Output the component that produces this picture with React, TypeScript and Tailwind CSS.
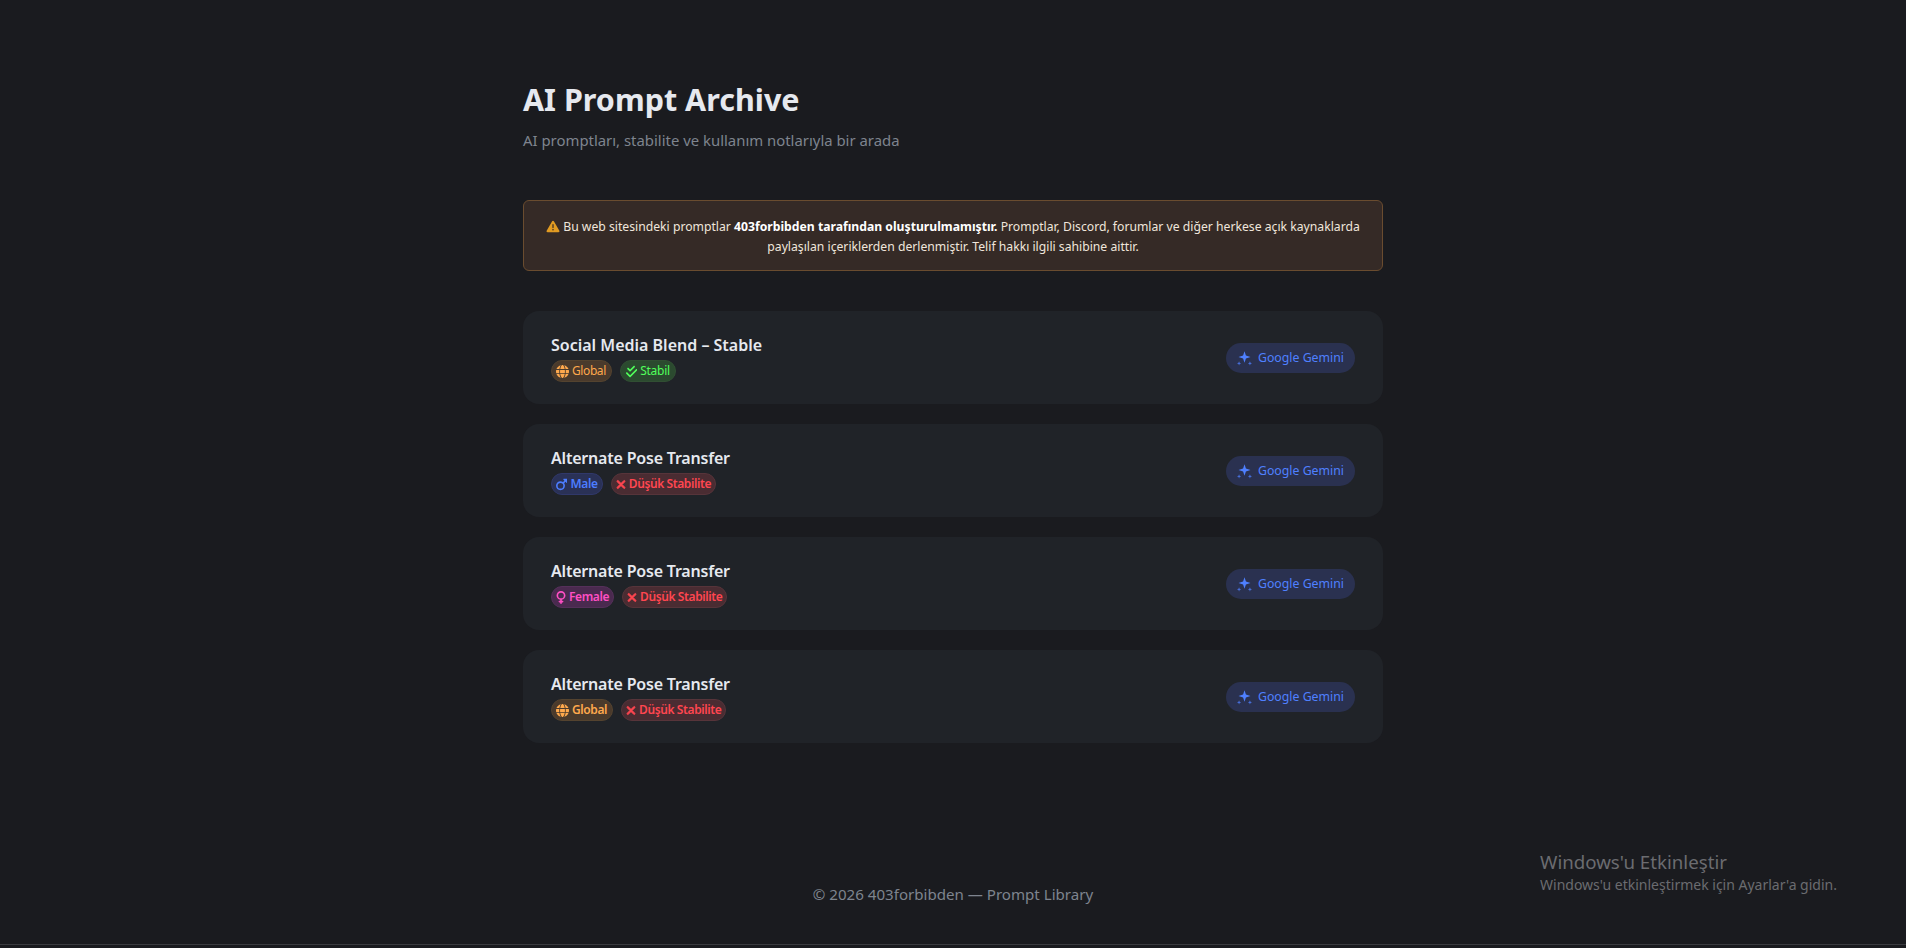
import React from "react";
import { FaGlobe, FaCheckDouble, FaMars, FaVenus, FaXmark, FaTriangleExclamation } from "react-icons/fa6";

function Sparkle({ className }: { className?: string }) {
  return (
    <svg viewBox="0 0 16 16" className={className} fill="currentColor">
      <path d="M8 0.2 L9.5 4.9 L14.4 6.4 L9.5 7.9 L8 12.6 L6.5 7.9 L1.6 6.4 L6.5 4.9 Z" />
      <path d="M2.2 11 L2.8 12.6 L4.4 13.2 L2.8 13.8 L2.2 15.4 L1.6 13.8 L0 13.2 L1.6 12.6 Z" opacity="0.8" />
      <path d="M13.8 11 L14.4 12.6 L16 13.2 L14.4 13.8 L13.8 15.4 L13.2 13.8 L11.6 13.2 L13.2 12.6 Z" opacity="0.8" />
    </svg>
  );
}

type TagKind = "global" | "stable" | "male" | "female" | "low";

function Tag({ kind, bold }: { kind: TagKind; bold?: boolean }) {
  const weight = bold ? "font-semibold" : "font-normal";
  if (kind === "global")
    return (
      <span className={`flex h-[22px] items-center gap-[3px] rounded-full border border-[#54432f] bg-[#4a3a2c] pl-[4px] pr-[5px] text-[12px] tracking-[-0.4px] text-[#ffa94d] ${weight}`}>
        <FaGlobe className="h-[13px] w-[13px]" />
        Global
      </span>
    );
  if (kind === "stable")
    return (
      <span className={`flex h-[22px] items-center gap-[3px] rounded-full border border-[#314f33] bg-[#2b4a2f] pl-[5px] pr-[5px] text-[12px] tracking-[-0.3px] text-[#51ff5b] ${weight}`}>
        <FaCheckDouble className="h-[13px] w-[11.4px]" />
        Stabil
      </span>
    );
  if (kind === "male")
    return (
      <span className="flex h-[22px] items-center gap-[3px] rounded-full border border-[#30386a] bg-[#2a3156] pl-[4px] pr-[4px] text-[12px] font-semibold tracking-[-0.3px] text-[#4c7dff]">
        <FaMars className="h-[13px] w-[11.4px]" />
        Male
      </span>
    );
  if (kind === "female")
    return (
      <span className="flex h-[22px] items-center gap-[3px] rounded-full border border-[#55305a] bg-[#4a2a4f] pl-[4px] pr-[4px] text-[12px] font-semibold tracking-[-0.4px] text-[#ff4fc4]">
        <FaVenus className="h-[13px] w-[10px]" />
        Female
      </span>
    );
  return (
    <span className="flex h-[22px] items-center gap-[3px] rounded-full border border-[#57343a] bg-[#4a2c32] pl-[4px] pr-[4px] text-[12px] font-semibold tracking-[-0.4px] text-[#ff4650]">
      <FaXmark className="h-[13px] w-[10px]" stroke="currentColor" strokeWidth={30} />
      Düşük Stabilite
    </span>
  );
}

function Card({ title, tags, bold, tight }: { title: string; tags: TagKind[]; bold?: boolean; tight?: boolean }) {
  return (
    <div className="flex h-[93px] items-center justify-between rounded-[16px] bg-[#202328] px-[28px]">
      <div className="flex flex-col gap-[3px] pt-[1px]">
        <div className={`text-[16px] leading-[23px] font-semibold text-[#e6e9ef] ${tight ? "tracking-[-0.2px]" : ""}`}>{title}</div>
        <div className="flex gap-[8px]">
          {tags.map((t) => (
            <Tag key={t} kind={t} bold={bold} />
          ))}
        </div>
      </div>
      <div className="flex h-[30px] items-center gap-[6px] rounded-full bg-[#2a3150] px-[11px] pt-[2px] text-[12.3px] text-[#4f80ff]">
        <Sparkle className="h-[15px] w-[15px]" />
        Google Gemini
      </div>
    </div>
  );
}

export default function App() {
  return (
    <div className="relative flex h-[948px] flex-col overflow-hidden bg-[#1a1b1f] font-['Noto_Sans','Open_Sans',sans-serif]">
      <main className="mx-auto w-[860px] flex-1 pt-[79px]">
        <h1 className="text-[30.5px] leading-[40px] font-bold text-[#e6e9ef]">AI Prompt Archive</h1>
        <p className="mt-[10px] text-[14.9px] leading-[22px] text-[#7e848e]">AI promptları, stabilite ve kullanım notlarıyla bir arada</p>
        <div className="mt-[49px] rounded-[6px] border border-[#6a4c2f] bg-[#352a26] px-[20px] pt-[16px] pb-[14px] text-center text-[12.2px] leading-[19.5px] text-[#f0e6dc]">
          <FaTriangleExclamation className="mr-[3px] inline h-[13px] w-[14px] align-[-2px] text-[#e19b22]" />
          Bu web sitesindeki promptlar <strong className="font-bold text-white">403forbibden tarafından oluşturulmamıştır.</strong> Promptlar, Discord, forumlar ve diğer herkese açık kaynaklarda paylaşılan içeriklerden derlenmiştir. Telif hakkı ilgili sahibine aittir.
        </div>
        <div className="mt-[40px] flex flex-col gap-[20px]">
          <Card title="Social Media Blend – Stable" tags={["global", "stable"]} />
          <Card title="Alternate Pose Transfer" tags={["male", "low"]} tight />
          <Card title="Alternate Pose Transfer" tags={["female", "low"]} tight />
          <Card title="Alternate Pose Transfer" tags={["global", "low"]} bold tight />
        </div>
      </main>
      <footer className="pb-[40px] text-center text-[15.1px] leading-[20px] text-[#7e848e]">© 2026 403forbibden — Prompt Library</footer>
      <div className="h-[1px] bg-[#3a3b3f]" />
      <div className="h-[3px]" />
      <div className="absolute top-[849px] left-[1540px] text-[#6b6c70]">
        <div className="text-[18.7px] leading-[26px]">Windows'u Etkinleştir</div>
        <div className="text-[14px] leading-[20px]">Windows'u etkinleştirmek için Ayarlar'a gidin.</div>
      </div>
    </div>
  );
}
